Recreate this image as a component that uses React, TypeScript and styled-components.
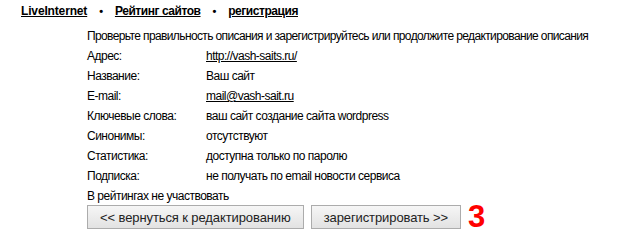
import { FC } from 'react';
import styled, { createGlobalStyle } from 'styled-components';

const GlobalStyle = createGlobalStyle`
  body {
    margin: 0;
    background: #fff;
    font-family: 'Liberation Sans', Arial, sans-serif;
    color: #000;
  }
`;

const Page = styled.div`
  width: 619px;
  height: 241px;
  overflow: hidden;
`;

const Nav = styled.div`
  display: flex;
  align-items: center;
  padding: 3px 0 0 21px;
  height: 16px;
  font-size: 12px;
  font-weight: bold;
  letter-spacing: -0.15px;
`;

const NavLink = styled.a<{ $cyr?: boolean }>`
  color: #000;
  text-decoration: underline;
  letter-spacing: ${p => (p.$cyr ? '-0.45px' : 'inherit')};
`;

const Bullet = styled.span`
  margin: 0 12px;
  font-size: 11px;
`;

const Content = styled.div`
  padding: 7px 0 0 87px;
  font-size: 12px;
  letter-spacing: -0.5px;
`;

const Line = styled.div<{ $tight?: boolean }>`
  height: 20px;
  line-height: 20px;
  white-space: nowrap;
  letter-spacing: ${p => (p.$tight ? '-0.62px' : 'inherit')};
`;

const Row = styled.div`
  display: grid;
  grid-template-columns: 119px 1fr;
  height: 20px;
  line-height: 20px;
  white-space: nowrap;
`;

const Value = styled.span<{ $link?: boolean }>`
  color: #000;
  text-decoration: ${p => (p.$link ? 'underline' : 'none')};
`;

const Actions = styled.div`
  display: flex;
  align-items: center;
  gap: 7px;
  margin-top: -1px;
`;

const Button = styled.button`
  height: 24px;
  padding: 0 12px;
  font-family: 'Liberation Sans', Arial, sans-serif;
  font-size: 13px;
  letter-spacing: -0.1px;
  color: #222;
  background: linear-gradient(#f6f6f6, #e2e2e2);
  border: 1px solid #acacac;
  border-radius: 0;
  white-space: nowrap;
`;

const Step = styled.span`
  color: #f00;
  font-size: 31px;
  font-weight: bold;
  line-height: 24px;
  letter-spacing: 0;
`;

const rows: { label: string; value: string; link?: boolean }[] = [
  { label: 'Адрес:', value: 'http://vash-saits.ru/', link: true },
  { label: 'Название:', value: 'Ваш сайт' },
  { label: 'E-mail:', value: 'mail@vash-sait.ru', link: true },
  { label: 'Ключевые слова:', value: 'ваш сайт создание сайта wordpress' },
  { label: 'Синонимы:', value: 'отсутствуют' },
  { label: 'Статистика:', value: 'доступна только по паролю' },
  { label: 'Подписка:', value: 'не получать по email новости сервиса' },
];

const App: FC = () => {
  return (
    <Page>
      <GlobalStyle />
      <Nav>
        <NavLink>LiveInternet</NavLink>
        <Bullet>•</Bullet>
        <NavLink $cyr>Рейтинг сайтов</NavLink>
        <Bullet>•</Bullet>
        <NavLink $cyr>регистрация</NavLink>
      </Nav>
      <Content>
        <Line $tight>Проверьте правильность описания и зарегистрируйтесь или продолжите редактирование описания</Line>
        {rows.map(r => (
          <Row key={r.label}>
            <span>{r.label}</span>
            <Value $link={r.link}>{r.value}</Value>
          </Row>
        ))}
        <Line>В рейтингах не участвовать</Line>
        <Actions>
          <Button type="button">&lt;&lt; вернуться к редактированию</Button>
          <Button type="button">зарегистрировать &gt;&gt;</Button>
          <Step>3</Step>
        </Actions>
      </Content>
    </Page>
  );
};

export default App;
